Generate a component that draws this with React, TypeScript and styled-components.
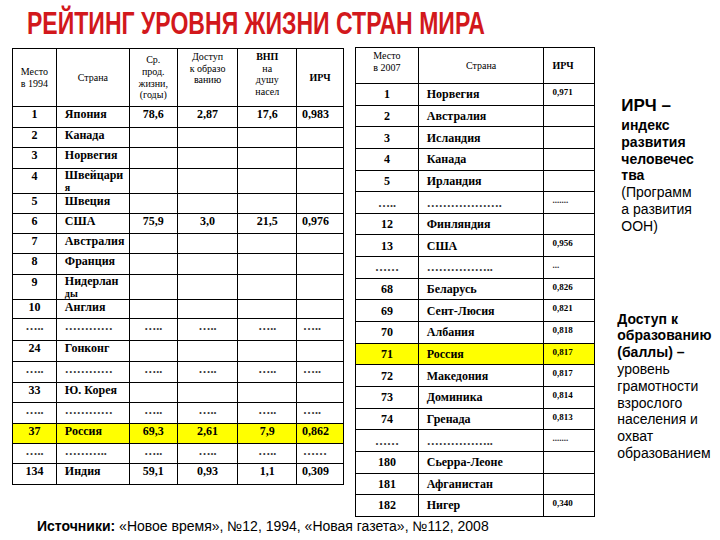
import React from "react";
import styled, { createGlobalStyle } from "styled-components";

const GlobalStyle = createGlobalStyle`
  html, body { margin: 0; padding: 0; background: #fff; }
`;

const Slide = styled.div`
  width: 720px;
  height: 540px;
  overflow: hidden;
  background: #fff;
  color: #000;
  font-family: "Liberation Serif", "Times New Roman", serif;
`;

const Title = styled.h1`
  margin: 0;
  height: 47px;
  box-sizing: border-box;
  padding: 7px 0 0 27px;
  font-family: "Liberation Sans", Arial, sans-serif;
  font-size: 32px;
  line-height: 32px;
  font-weight: 700;
  color: #d2181c;
  white-space: nowrap;
  span {
    display: inline-block;
    transform: scaleX(0.72);
    transform-origin: left center;
  }
`;

const Body = styled.div`
  display: flex;
  align-items: flex-start;
  height: 469px;
`;

const Table = styled.table<{ $ml: number; $mt: number }>`
  border-collapse: collapse;
  table-layout: fixed;
  margin: ${p => p.$mt}px 0 0 ${p => p.$ml}px;
  td { border: 1px solid #000; padding: 0; overflow: hidden; }
`;

const Row = styled.tr<{ $h: number; $hl?: boolean }>`
  height: ${p => p.$h}px;
  background: ${p => (p.$hl ? "#ffff00" : "transparent")};
`;

const Head = styled.td<{ $top?: boolean; $align?: string; $pl?: number }>`
  font-size: 10px;
  line-height: 11.7px;
  text-align: ${p => p.$align ?? "center"};
  vertical-align: ${p => (p.$top ? "top" : "middle")};
  padding: ${p => (p.$top ? "2px" : "0")} 0 0 ${p => p.$pl ?? 0}px !important;
  b { font-weight: 700; }
`;

const Cell = styled.td<{ $align?: string; $pl?: number; $size?: number; $mid?: boolean; $lh?: number }>`
  font-size: ${p => p.$size ?? 12}px;
  line-height: ${p => p.$lh ?? 14}px;
  font-weight: 700;
  text-align: ${p => p.$align ?? "center"};
  vertical-align: ${p => (p.$mid ? "middle" : "top")};
  padding-left: ${p => p.$pl ?? 0}px !important;
  white-space: nowrap;
`;

const Wrap = styled.span`
  display: block;
  font-size: 10px;
  line-height: 11px;
`;

const Dim = styled.span`
  color: #333;
`;

const Side = styled.aside`
  margin-left: 22px;
  width: 103px;
  font-family: "Liberation Sans", Arial, sans-serif;
  font-size: 14px;
  line-height: 16.8px;
  color: #000;
`;

const Note = styled.p<{ $mt: number; $pl: number }>`
  margin: ${p => p.$mt}px 0 0;
  padding-left: ${p => p.$pl}px;
`;

const Lead = styled.span`
  display: block;
  font-size: 17px;
  line-height: 22px;
  font-weight: 700;
`;

const Footer = styled.footer`
  padding-left: 37px;
  font-family: "Liberation Sans", Arial, sans-serif;
  font-size: 14px;
  line-height: 20px;
  white-space: nowrap;
`;

type LRow = { n: string; c: React.ReactNode; v?: string[]; h: number; hl?: boolean; dots?: string[] };

const leftRows: LRow[] = [
  { n: "1", c: "Япония", v: ["78,6", "2,87", "17,6", "0,983"], h: 21 },
  { n: "2", c: "Канада", h: 20 },
  { n: "3", c: "Норвегия", h: 21 },
  { n: "4", c: <>Швейцари<Wrap>я</Wrap></>, h: 25 },
  { n: "5", c: "Швеция", h: 20 },
  { n: "6", c: "США", v: ["75,9", "3,0", "21,5", "0,976"], h: 20 },
  { n: "7", c: "Австралия", h: 20 },
  { n: "8", c: "Франция", h: 21 },
  { n: "9", c: <>Нидерлан<Wrap>ды</Wrap></>, h: 25 },
  { n: "10", c: "Англия", h: 19 },
  { n: "", c: "", h: 22, dots: ["…..", "…………", "…..", "…..", "…..", "….."] },
  { n: "24", c: "Гонконг", h: 21 },
  { n: "", c: "", h: 21, dots: ["…..", "…………", "…..", "…..", "…..", "….."] },
  { n: "33", c: "Ю. Корея", h: 20 },
  { n: "", c: "", h: 21, dots: ["…..", "…………", "…..", "…..", "…..", "….."] },
  { n: "37", c: "Россия", v: ["69,3", "2,61", "7,9", "0,862"], h: 20, hl: true },
  { n: "", c: "", h: 20, dots: ["…..", "………..", "…..", "…..", "…..", "……"] },
  { n: "134", c: "Индия", v: ["59,1", "0,93", "1,1", "0,309"], h: 21 },
];

type RRow = { n: string; c: string; v?: string; hl?: boolean; dots?: boolean };

const rightRows: RRow[] = [
  { n: "1", c: "Норвегия", v: "0,971" },
  { n: "2", c: "Австралия" },
  { n: "3", c: "Исландия" },
  { n: "4", c: "Канада" },
  { n: "5", c: "Ирландия" },
  { n: "…..", c: "……………….", v: ".......", dots: true },
  { n: "12", c: "Финляндия" },
  { n: "13", c: "США", v: "0,956" },
  { n: "……", c: "……………..", v: "...", dots: true },
  { n: "68", c: "Беларусь", v: "0,826" },
  { n: "69", c: "Сент-Люсия", v: "0,821" },
  { n: "70", c: "Албания", v: "0,818" },
  { n: "71", c: "Россия", v: "0,817", hl: true },
  { n: "72", c: "Македония", v: "0,817" },
  { n: "73", c: "Доминика", v: "0,814" },
  { n: "74", c: "Гренада", v: "0,813" },
  { n: "……", c: "……………..", v: ".......", dots: true },
  { n: "180", c: "Сьерра-Леоне" },
  { n: "181", c: "Афганистан" },
  { n: "182", c: "Нигер", v: "0,340" },
];

function LeftTable() {
  return (
    <Table $ml={12} $mt={1}>
      <colgroup>
        {[44, 73, 48, 61, 59, 47].map((w, i) => <col key={i} style={{ width: w }} />)}
      </colgroup>
      <tbody>
        <Row $h={58}>
          <Head>Место<br />в 1994</Head>
          <Head>Страна</Head>
          <Head>Ср.<br />прод.<br />жизни,<br />(годы)</Head>
          <Head $top>Доступ<br />к образо<br />ванию</Head>
          <Head $top><b>ВНП</b><br />на<br />душу<br />насел</Head>
          <Head><b>ИРЧ</b></Head>
        </Row>
        {leftRows.map((r, i) =>
          r.dots ? (
            <Row key={i} $h={r.h}>
              {r.dots.map((d, j) => (
                <Cell key={j} $align={j === 1 || j === 5 ? "left" : "center"} $pl={j === 1 ? 8 : j === 5 ? 6 : 0}>
                  <Dim>{d}</Dim>
                </Cell>
              ))}
            </Row>
          ) : (
            <Row key={i} $h={r.h} $hl={r.hl}>
              <Cell>{r.n}</Cell>
              <Cell $align="left" $pl={8} $lh={typeof r.c === "string" ? 14 : 13}>{r.c}</Cell>
              <Cell>{r.v?.[0]}</Cell>
              <Cell>{r.v?.[1]}</Cell>
              <Cell>{r.v?.[2]}</Cell>
              <Cell $align="left" $pl={5}>{r.v?.[3]}</Cell>
            </Row>
          )
        )}
      </tbody>
    </Table>
  );
}

function RightTable() {
  return (
    <Table $ml={11} $mt={0}>
      <colgroup>
        {[63, 126, 51].map((w, i) => <col key={i} style={{ width: w }} />)}
      </colgroup>
      <tbody>
        <Row $h={36}>
          <Head $top>Место<br />в 2007</Head>
          <Head>Страна</Head>
          <Head $align="left" $pl={8}><b>ИРЧ</b></Head>
        </Row>
        {rightRows.map((r, i) => (
          <Row key={i} $h={21.65} $hl={r.hl}>
            <Cell $mid>{r.dots ? <Dim>{r.n}</Dim> : r.n}</Cell>
            <Cell $mid $align="left" $pl={8}>{r.dots ? <Dim>{r.c}</Dim> : r.c}</Cell>
            <Cell $align="left" $pl={8} $size={9} $lh={16}>{r.dots ? <Dim>{r.v}</Dim> : r.v}</Cell>
          </Row>
        ))}
      </tbody>
    </Table>
  );
}

export default function App() {
  return (
    <Slide>
      <GlobalStyle />
      <Title><span>РЕЙТИНГ УРОВНЯ ЖИЗНИ СТРАН МИРА</span></Title>
      <Body>
        <LeftTable />
        <RightTable />
        <Side>
          <Note $mt={48} $pl={4}>
            <Lead>ИРЧ –</Lead>
            <b>индекс<br />развития<br />человечес<br />тва</b>
            <br />(Программ<br />а развития<br />ООН)
          </Note>
          <Note $mt={76} $pl={0}>
            <b>Доступ к<br />образованию<br />(баллы) –</b>
            <br />уровень<br />грамотности<br />взрослого<br />населения и<br />охват<br />образованием
          </Note>
        </Side>
      </Body>
      <Footer>
        <b>Источники:</b> «Новое время», №12, 1994, «Новая газета», №112, 2008
      </Footer>
    </Slide>
  );
}
